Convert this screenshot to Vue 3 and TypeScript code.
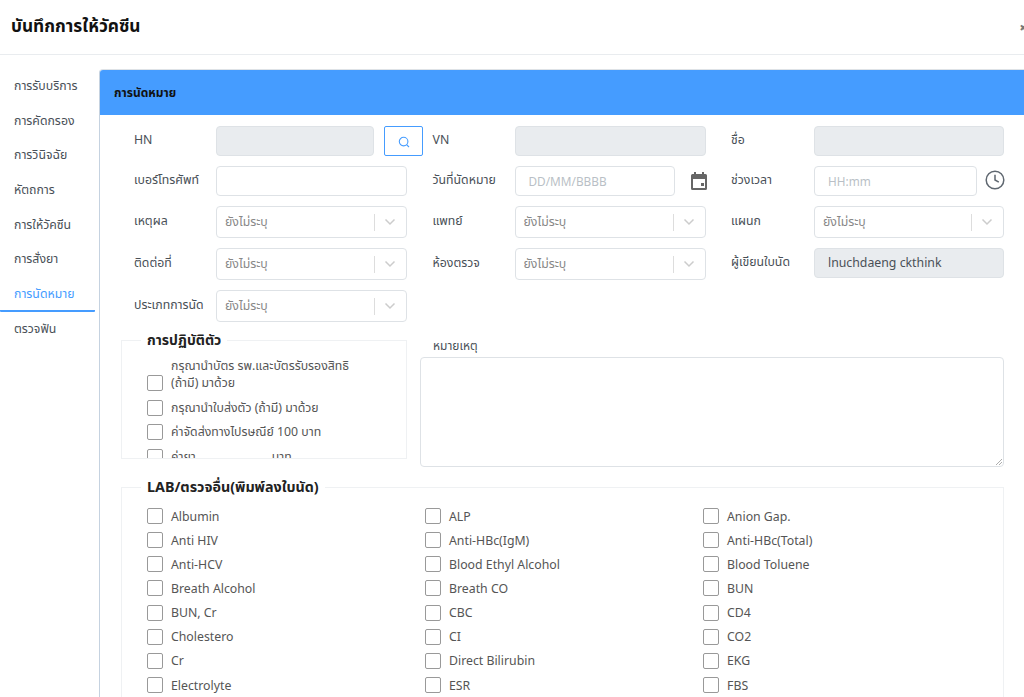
<script setup lang="ts">
const navItems: string[] = ['การรับบริการ', 'การคัดกรอง', 'การวินิจฉัย', 'หัตถการ', 'การให้วัคซีน', 'การสั่งยา', 'การนัดหมาย', 'ตรวจฟัน']
const labs: string[] = [
  'Albumin', 'ALP', 'Anion Gap.',
  'Anti HIV', 'Anti-HBc(IgM)', 'Anti-HBc(Total)',
  'Anti-HCV', 'Blood Ethyl Alcohol', 'Blood Toluene',
  'Breath Alcohol', 'Breath CO', 'BUN',
  'BUN, Cr', 'CBC', 'CD4',
  'Cholestero', 'CI', 'CO2',
  'Cr', 'Direct Bilirubin', 'EKG',
  'Electrolyte', 'ESR', 'FBS',
]
const rules: string[] = ['กรุณานำบัตร รพ.และบัตรรับรองสิทธิ (ถ้ามี) มาด้วย', 'กรุณานำใบส่งตัว (ถ้ามี) มาด้วย', 'ค่าจัดส่งทางไปรษณีย์ 100 บาท']
</script>

<template>
  <div class="page">
    <header class="top">
      <h1>บันทึกการให้วัคซีน</h1>
      <span class="close">✖</span>
    </header>
    <div class="body">
      <nav class="nav">
        <a v-for="n in navItems" :key="n" :class="{ active: n === 'การนัดหมาย' }">{{ n }}</a>
      </nav>
      <section class="card">
        <div class="card-head">การนัดหมาย</div>
        <div class="form">
          <div class="field">
            <label>HN</label>
            <div class="ctl">
              <div class="input off short"></div>
              <button class="search" type="button">
                <svg width="12" height="12" viewBox="0 0 12 12" fill="none" stroke="#459cff" stroke-width="1.1"><circle cx="5.6" cy="5.6" r="4.3"/><path d="M8.8 8.8 11 11"/></svg>
              </button>
            </div>
          </div>
          <div class="field">
            <label>VN</label>
            <div class="ctl"><div class="input off"></div></div>
          </div>
          <div class="field third">
            <label>ชื่อ</label>
            <div class="ctl"><div class="input off"></div></div>
          </div>

          <div class="field">
            <label>เบอร์โทรศัพท์</label>
            <div class="ctl"><div class="input"></div></div>
          </div>
          <div class="field">
            <label>วันที่นัดหมาย</label>
            <div class="ctl">
              <div class="input date ph">DD/MM/BBBB</div>
              <svg class="cal" width="16" height="18" viewBox="0 0 16 18"><path fill="#666" d="M3 0h2v2h6V0h2v2h1.500A1.500 1.500 0 0 1 16 3.500v13a1.500 1.500 0 0 1-1.500 1.500h-13A1.500 1.500 0 0 1 0 16.500v-13A1.500 1.500 0 0 1 1.500 2H3V0Zm-1 7v9h12V7H2Zm8 4h3v3h-3v-3Z"/></svg>
            </div>
          </div>
          <div class="field third">
            <label>ช่วงเวลา</label>
            <div class="ctl">
              <div class="input time ph">HH:mm</div>
              <svg class="clock" width="20" height="20" viewBox="0 0 20 20" fill="none" stroke="#5f6770" stroke-width="1.500"><circle cx="10" cy="10" r="8.800"/><path d="M10 4.800V10l3.800 2.200"/></svg>
            </div>
          </div>

          <div class="field sel-row">
            <label>เหตุผล</label>
            <div class="ctl"><div class="select"><span>ยังไม่ระบุ</span><i></i><svg width="12" height="8" viewBox="0 0 12 8" fill="none" stroke="#ccc" stroke-width="1.500"><path d="m1.500 1.500 4.500 4.500 4.500-4.500"/></svg></div></div>
          </div>
          <div class="field sel-row">
            <label>แพทย์</label>
            <div class="ctl"><div class="select"><span>ยังไม่ระบุ</span><i></i><svg width="12" height="8" viewBox="0 0 12 8" fill="none" stroke="#ccc" stroke-width="1.500"><path d="m1.500 1.500 4.500 4.500 4.500-4.500"/></svg></div></div>
          </div>
          <div class="field sel-row third">
            <label>แผนก</label>
            <div class="ctl"><div class="select"><span>ยังไม่ระบุ</span><i></i><svg width="12" height="8" viewBox="0 0 12 8" fill="none" stroke="#ccc" stroke-width="1.500"><path d="m1.500 1.500 4.500 4.500 4.500-4.500"/></svg></div></div>
          </div>

          <div class="field sel-row">
            <label>ติดต่อที่</label>
            <div class="ctl"><div class="select"><span>ยังไม่ระบุ</span><i></i><svg width="12" height="8" viewBox="0 0 12 8" fill="none" stroke="#ccc" stroke-width="1.500"><path d="m1.500 1.500 4.500 4.500 4.500-4.500"/></svg></div></div>
          </div>
          <div class="field sel-row">
            <label>ห้องตรวจ</label>
            <div class="ctl"><div class="select"><span>ยังไม่ระบุ</span><i></i><svg width="12" height="8" viewBox="0 0 12 8" fill="none" stroke="#ccc" stroke-width="1.500"><path d="m1.500 1.500 4.500 4.500 4.500-4.500"/></svg></div></div>
          </div>
          <div class="field third">
            <label>ผู้เขียนใบนัด</label>
            <div class="ctl"><div class="input off val">lnuchdaeng ckthink</div></div>
          </div>

          <div class="field sel-row">
            <label>ประเภทการนัด</label>
            <div class="ctl"><div class="select"><span>ยังไม่ระบุ</span><i></i><svg width="12" height="8" viewBox="0 0 12 8" fill="none" stroke="#ccc" stroke-width="1.500"><path d="m1.500 1.500 4.500 4.500 4.500-4.500"/></svg></div></div>
          </div>
        </div>

        <div class="mid">
          <fieldset class="box rules">
            <legend>การปฏิบัติตัว</legend>
            <div class="rule-list">
              <div v-for="r in rules" :key="r" class="check"><span class="cb"></span><span class="txt">{{ r }}</span></div>
              <div class="check"><span class="cb"></span><span class="txt fee">ค่ายา<em></em>บาท</span></div>
            </div>
          </fieldset>
          <div class="note">
            <div class="note-label">หมายเหตุ</div>
            <div class="area">
              <svg width="7" height="7" viewBox="0 0 7 7" stroke="#999" stroke-width="0.800"><path d="M1 7 7 1M4 7l3-3"/></svg>
            </div>
          </div>
        </div>

        <fieldset class="box lab">
          <legend>LAB/ตรวจอื่น(พิมพ์ลงใบนัด)</legend>
          <div class="lab-grid">
            <div v-for="l in labs" :key="l" class="check"><span class="cb"></span><span class="txt">{{ l }}</span></div>
          </div>
        </fieldset>
      </section>
    </div>
  </div>
</template>

<style>
html, body { margin: 0; background: #fff; overflow: hidden; }
</style>

<style scoped>
.page {
  width: 1024px;
  height: 697px;
  overflow: hidden;
  background: #fff;
  font-family: "Noto Sans", "Noto Sans Thai", "DejaVu Sans", sans-serif;
  font-size: 12.300px;
  color: #495057;
}
.top {
  height: 54px;
  border-bottom: 1px solid #e9ecef;
  display: flex;
  align-items: center;
  justify-content: space-between;
  padding-left: 11px;
  overflow: hidden;
}
.top h1 { margin: 0; font-size: 17.300px; font-weight: 700; color: #111; }
.close { color: #777; font-size: 9px; font-weight: 700; margin-right: -3px; }
.body { display: flex; padding-top: 14px; }
.nav { width: 95px; flex: none; display: flex; flex-direction: column; }
.nav a { height: 34.700px; line-height: 33px; padding-left: 14px; color: #495057; box-sizing: border-box; border-bottom: 2px solid transparent; }
.nav a.active { color: #459cff; border-bottom-color: #459cff; border-radius: 1px; }
.card {
  margin-left: 4px;
  flex: 1;
  min-width: 0;
  border-left: 1px solid #c5d2e0;
  border-top: 1px solid #dee2e6;
  border-top-left-radius: 4px;
  height: 640px;
}
.card-head {
  height: 45px;
  line-height: 45px;
  background: #459cff;
  padding-left: 14px;
  font-weight: 700;
  font-size: 12px;
  color: #111;
  border-top-left-radius: 3px;
}
.form {
  display: grid;
  grid-template-columns: repeat(3, 298.500px);
  row-gap: 10px;
  padding: 11px 0 0 34px;
  align-items: start;
}
.field { display: flex; }
.field label { width: 82px; flex: none; line-height: 27px; }
.sel-row label { line-height: 30px; }
.third label { width: 83px; }
.third .ctl { width: 190px; }
.ctl { display: flex; align-items: center; width: 191px; flex: none; }
.input {
  height: 30px;
  width: 100%;
  box-sizing: border-box;
  border: 1px solid #dee2e6;
  border-radius: 4px;
  padding: 0 13px;
  line-height: 28px;
  flex: none;
}
.off { background: #e9ecef; }
.short { width: 158px; }
.date { width: 160px; }
.time { width: 163px; }
.ph { color: #b9bfc6; font-size: 11.800px; }
.search {
  flex: none;
  margin-left: 10px;
  width: 39px;
  height: 30px;
  border: 1px solid #459cff;
  background: #fff;
  border-radius: 2px;
  padding: 2px 0 0;
  display: flex;
  align-items: center;
  justify-content: center;
}
.cal { margin-left: 16px; flex: none; }
.clock { margin-left: 8px; flex: none; margin-top: -3px; }
.select {
  height: 32px;
  width: 100%;
  box-sizing: border-box;
  border: 1px solid #dee2e6;
  border-radius: 4px;
  display: flex;
  align-items: center;
  padding-left: 8px;
  color: #888;
}
.select span { flex: 1; padding-top: 1px; }
.select i { width: 1px; height: 17px; background: #ddd; }
.select svg { margin: 0 10px 0 9px; }
.mid { display: flex; margin-top: 10px; padding-left: 21px; align-items: flex-start; }
.box {
  border: 1px solid #eff1f3;
  margin: 0;
  padding: 0;
  min-width: 0;
  box-sizing: border-box;
}
.box legend {
  margin-left: 19px;
  padding: 0 6px;
  font-weight: 700;
  font-size: 14px;
  color: #222;
  line-height: 16px;
}
.rules { width: 286px; height: 127px; flex: none; overflow: hidden; }
.rule-list { padding: 9px 0 0 25px; box-sizing: border-box; }
.rule-list .check { margin-bottom: 7.500px; align-items: flex-end; }
.rule-list .txt { max-width: 196px; }
.check { display: flex; align-items: center; color: #555; }
.cb {
  width: 16px;
  height: 16px;
  flex: none;
  box-sizing: border-box;
  border: 1px solid #999;
  border-radius: 2px;
  margin-right: 8px;
}
.txt { line-height: 17px; }
.fee em { display: inline-block; width: 76px; }
.note { margin-left: 13px; flex: 1; min-width: 0; }
.note-label { padding-left: 13px; font-size: 12px; height: 18px; line-height: 14px; margin-top: 6px; padding-top: 1px; }
.area {
  width: 584px;
  height: 110px;
  box-sizing: border-box;
  border: 1px solid #dee2e6;
  border-radius: 4px;
  display: flex;
  justify-content: flex-end;
  align-items: flex-end;
  padding: 0 1px 1px 0;
}
.lab { margin: 12px 0 0 21px; width: 883px; }
.lab legend { font-size: 14.300px; }
.lab-grid {
  display: grid;
  grid-template-columns: repeat(3, 278px);
  grid-auto-rows: 24.150px;
  padding: 9px 0 0 25px;
}
</style>
